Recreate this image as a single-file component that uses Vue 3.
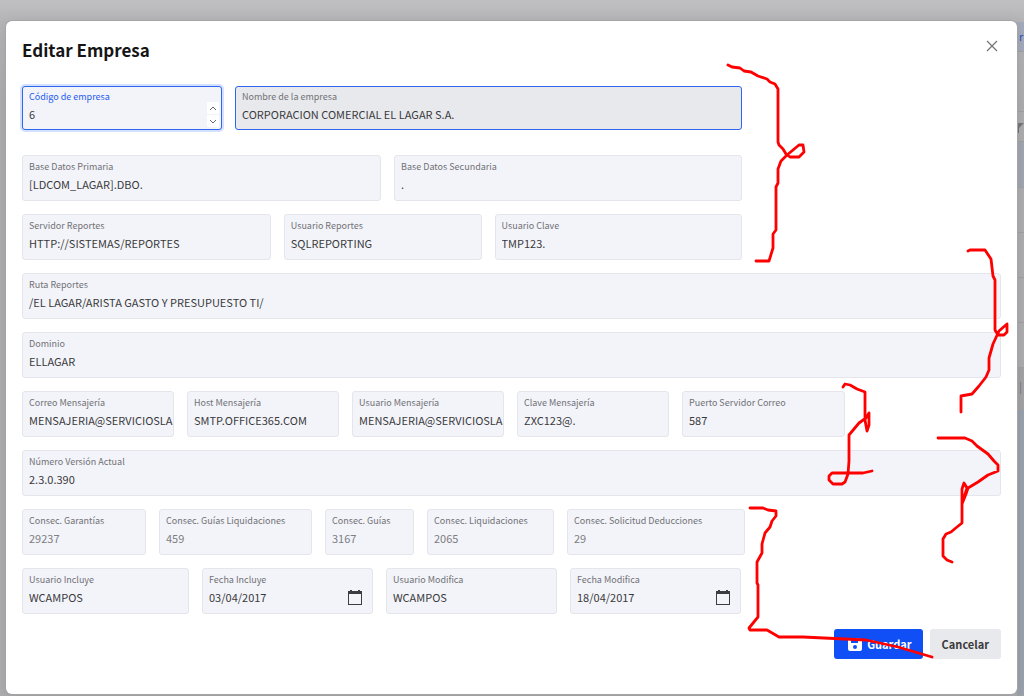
<script setup>
import { ref } from 'vue'

const open = ref(true)

const rows = ref([
  {
    rest: 246,
    lead: true,
    fields: [
      { id: 'codigo', label: 'Código de empresa', value: '6', span: 200, kind: 'number' },
      { id: 'nombre', label: 'Nombre de la empresa', value: 'CORPORACION COMERCIAL EL LAGAR S.A.', span: 507, kind: 'locked' }
    ]
  },
  {
    rest: 246,
    fields: [
      { id: 'bd1', label: 'Base Datos Primaria', value: '[LDCOM_LAGAR].DBO.', span: 359 },
      { id: 'bd2', label: 'Base Datos Secundaria', value: '.', span: 348 }
    ]
  },
  {
    rest: 246,
    fields: [
      { id: 'servidor', label: 'Servidor Reportes', value: 'HTTP://SISTEMAS/REPORTES', span: 249 },
      { id: 'usuarioRep', label: 'Usuario Reportes', value: 'SQLREPORTING', span: 198 },
      { id: 'claveRep', label: 'Usuario Clave', value: 'TMP123.', span: 248 }
    ]
  },
  { rest: 0, fields: [{ id: 'ruta', label: 'Ruta Reportes', value: '/EL LAGAR/ARISTA GASTO Y PRESUPUESTO TI/', span: 979 }] },
  { rest: 0, fields: [{ id: 'dominio', label: 'Dominio', value: 'ELLAGAR', span: 979 }] },
  {
    rest: 143,
    fields: [
      { id: 'correo', label: 'Correo Mensajería', value: 'MENSAJERIA@SERVICIOSLA', span: 152 },
      { id: 'host', label: 'Host Mensajería', value: 'SMTP.OFFICE365.COM', span: 152 },
      { id: 'usuarioMsg', label: 'Usuario Mensajería', value: 'MENSAJERIA@SERVICIOSLA', span: 152 },
      { id: 'claveMsg', label: 'Clave Mensajería', value: 'ZXC123@.', span: 152 },
      { id: 'puerto', label: 'Puerto Servidor Correo', value: '587', span: 163 }
    ]
  },
  { rest: 0, fields: [{ id: 'version', label: 'Número Versión Actual', value: '2.3.0.390', span: 979 }] },
  {
    rest: 243,
    fields: [
      { id: 'cGar', label: 'Consec. Garantías', value: '29237', span: 124, kind: 'muted' },
      { id: 'cGuiLiq', label: 'Consec. Guías Liquidaciones', value: '459', span: 153, kind: 'muted' },
      { id: 'cGui', label: 'Consec. Guías', value: '3167', span: 89, kind: 'muted' },
      { id: 'cLiq', label: 'Consec. Liquidaciones', value: '2065', span: 127, kind: 'muted' },
      { id: 'cSol', label: 'Consec. Solicitud Deducciones', value: '29', span: 178, kind: 'muted' }
    ]
  },
  {
    rest: 247,
    fields: [
      { id: 'uInc', label: 'Usuario Incluye', value: 'WCAMPOS', span: 167 },
      { id: 'fInc', label: 'Fecha Incluye', value: '03/04/2017', span: 171, kind: 'date' },
      { id: 'uMod', label: 'Usuario Modifica', value: 'WCAMPOS', span: 171 },
      { id: 'fMod', label: 'Fecha Modifica', value: '18/04/2017', span: 171, kind: 'date' }
    ]
  }
])

function columns(row) {
  const spans = row.fields.map((f) => f.span)
  if (row.rest) spans.push(row.rest)
  return spans.map((s) => `minmax(0, ${s}fr)`).join(' ')
}

function step(field, by) {
  field.value = String(Number(field.value) + by)
}
</script>

<template>
  <div class="page">
    <div class="behind" aria-hidden="true">
      <div class="strip strip-tab">r</div>
      <div class="strip strip-head"></div>
      <div class="strip strip-filter">
        <svg viewBox="0 0 12 12"><path d="M0 1h12L7 6v5H5V6z" /></svg>
      </div>
      <div class="strip strip-selected"></div>
      <div class="strip strip-row"></div>
      <div class="strip strip-row"></div>
      <div class="strip strip-row"></div>
      <div class="strip strip-row"></div>
      <div class="strip strip-bar">|</div>
      <div class="strip strip-foot"></div>
    </div>

    <section v-if="open" class="modal" role="dialog" aria-labelledby="titulo">
      <header class="head">
        <h1 id="titulo">Editar Empresa</h1>
        <button class="close" type="button" aria-label="Cerrar" @click="open = false">
          <svg viewBox="0 0 12 12"><path d="M1 1l10 10M11 1L1 11" /></svg>
        </button>
      </header>

      <form class="form" @submit.prevent>
        <div
          v-for="(row, i) in rows"
          :key="i"
          class="row"
          :class="{ lead: row.lead }"
          :style="{ gridTemplateColumns: columns(row) }"
        >
          <div v-for="f in row.fields" :key="f.id" class="field" :class="f.kind">
            <label :for="f.id">{{ f.label }}</label>
            <input :id="f.id" v-model="f.value" type="text" :readonly="f.kind === 'locked'" />
            <div v-if="f.kind === 'number'" class="spin">
              <button type="button" aria-label="Aumentar" @click="step(f, 1)">
                <svg viewBox="0 0 8 5"><path d="M1 4l3-3 3 3" /></svg>
              </button>
              <button type="button" aria-label="Disminuir" @click="step(f, -1)">
                <svg viewBox="0 0 8 5"><path d="M1 1l3 3 3-3" /></svg>
              </button>
            </div>
            <button v-if="f.kind === 'date'" class="cal" type="button" aria-label="Elegir fecha">
              <svg viewBox="0 0 14 15"><path d="M2 0h2v1h6V0h2v1h2v14H0V1h2zM1 4v10h12V4z" fill-rule="evenodd" /></svg>
            </button>
          </div>
        </div>

        <div class="actions">
          <button class="btn primary" type="submit">
            <svg viewBox="0 0 14 13">
              <path d="M2 0h8l4 3v8a2 2 0 0 1-2 2H2a2 2 0 0 1-2-2V2a2 2 0 0 1 2-2zM3 2v3h7V2zM7 7a2 2 0 1 0 0 4a2 2 0 0 0 0-4z" fill-rule="evenodd" />
            </svg>
            Guardar
          </button>
          <button class="btn" type="button" @click="open = false">Cancelar</button>
        </div>
      </form>
    </section>

    <svg class="marks" viewBox="0 0 1024 696" preserveAspectRatio="none" aria-hidden="true">
      <path d="M728 65L732 67L740 68L744 71L751 72L758 76L767 79L770 82L775 84L778 89V142L779 145L783 149L786 154L790 157H799L804 152L803 145L799 145L787 155L781 161L778 169V183L776 187V230L773 234V248L769 261H756" />
      <path d="M968 251L970 250H985L991 259L993 276L995 280V330L998 335H1004L1007 332V324L999 331L993 344L989 358V370L986 377L979 386L972 394L961 396V412" />
      <path d="M843 387L845 384L850 385L857 389L865 392V420L867 431L869 425V413L866 418L859 423L849 435V461L848 474L845 482L842 484H833L829 480V476L832 473L863 473L872 471" />
      <path d="M938 438H965L972 441L977 446L988 454L994 461L998 465V471L988 475L978 482L968 488L966 494L962 504L962 489L964 483L967 488L962 504V523L957 527L951 532L946 534L943 539V556L947 560L952 562" />
      <path d="M750 508H763L768 510L776 511V516L772 521L770 527L765 533L762 544V553L757 562V583L758 585V617L749 628L750 630H767L779 637L803 637L866 640L898 647L932 657" />
    </svg>
  </div>
</template>

<style>
body {
  margin: 0;
  overflow: hidden;
}
</style>

<style scoped>
.page {
  position: relative;
  box-sizing: border-box;
  min-height: 100vh;
  padding: 21px 7px 2px 6px;
  overflow: hidden;
  background: linear-gradient(#c0c0c2, #b5b5b7 21px, #aeaeb0 100px, #aeaeb0);
  font-family: "Noto Sans CJK SC", "Noto Sans", sans-serif;
  font-size: 11px;
  color: #3a3a3c;
}
button,
input {
  font: inherit;
  color: inherit;
}
.behind {
  position: absolute;
  top: 0;
  right: 0;
  bottom: 0;
  width: 7px;
  padding-top: 22px;
  display: flex;
  flex-direction: column;
}
.strip {
  box-sizing: border-box;
  flex: none;
  overflow: hidden;
  border-bottom: 1px solid #a2a2a4;
}
.strip-tab {
  height: 30px;
  padding-left: 2px;
  line-height: 29px;
  background: #a3abbd;
  color: #2c57b4;
}
.strip-head {
  height: 60px;
}
.strip-filter {
  height: 30px;
  padding-top: 10px;
}
.strip-filter svg {
  display: block;
  width: 12px;
  height: 12px;
  margin-left: -5px;
  fill: #77777a;
}
.strip-selected {
  height: 46px;
  background: #a2a7b2;
}
.strip-row {
  height: 45px;
}
.strip-bar {
  height: 42px;
  line-height: 36px;
  text-align: center;
  background: #a4a4a6;
  color: #77777a;
}
.strip-foot {
  flex: 1;
  background: #9aa3ae;
}
.modal {
  position: relative;
  box-sizing: border-box;
  min-height: calc(100vh - 23px);
  padding: 13px 16px 16px;
  border-radius: 6px;
  background: #fff;
  box-shadow: 0 0 0 1px #a5a5a7, 0 4px 16px rgba(0, 0, 0, 0.12);
}
.head {
  display: flex;
  justify-content: space-between;
  height: 52px;
}
h1 {
  margin: 0;
  font-size: 17px;
  line-height: 32px;
  font-weight: 700;
  color: #151515;
}
.close {
  width: 18px;
  height: 24px;
  padding: 3px;
  border: 0;
  background: none;
}
.close svg {
  display: block;
  width: 12px;
  height: 12px;
  fill: none;
  stroke: #77777a;
  stroke-width: 1.3;
}
.form {
  display: flex;
  flex-direction: column;
  gap: 13px;
}
.row {
  display: grid;
  gap: 13px;
}
.row.lead {
  margin-bottom: 12px;
}
.field {
  position: relative;
  box-sizing: border-box;
  height: 46px;
  padding: 1px 0 0 6px;
  border: 1px solid #e5e6eb;
  border-radius: 3px;
  background: #f3f4f9;
}
.lead .field {
  height: 44px;
  padding-top: 0;
  border-color: #2e66ee;
}
.field.number {
  box-shadow: 0 0 0 2px #d3e0ff;
}
.field.locked {
  background: #e8e9ed;
}
label {
  display: block;
  font-size: 9px;
  line-height: 20px;
  color: #717176;
}
.number label {
  color: #1f5cf0;
}
input {
  display: block;
  box-sizing: border-box;
  width: 100%;
  height: 14px;
  padding: 0;
  border: 0;
  outline: 0;
  background: none;
  line-height: 14px;
}
.muted input {
  color: #7d7d82;
}
.spin {
  position: absolute;
  right: 2px;
  bottom: 2px;
  display: grid;
  gap: 1px;
}
.spin button {
  width: 12px;
  height: 12px;
  padding: 3px 2px;
  border: 0;
  border-radius: 1px;
  background: #fff;
}
.spin svg {
  display: block;
  width: 8px;
  height: 5px;
  fill: none;
  stroke: #68686c;
}
.cal {
  position: absolute;
  right: 10px;
  bottom: 8px;
  padding: 0;
  border: 0;
  background: none;
}
.cal svg {
  display: block;
  width: 14px;
  height: 15px;
  fill: #3d3d40;
}
.actions {
  display: flex;
  justify-content: flex-end;
  gap: 7px;
  margin-top: 2px;
}
.btn {
  display: flex;
  align-items: center;
  gap: 5px;
  height: 30px;
  padding: 0 12px;
  border: 0;
  border-radius: 3px;
  background: #e8e9ed;
  font-weight: 700;
}
.primary {
  padding: 0 11px 0 14px;
  background: #0f4ff5;
  color: #fff;
}
.primary svg {
  width: 14px;
  height: 13px;
  fill: #fff;
}
.marks {
  position: absolute;
  inset: 0;
  width: 100%;
  height: 100%;
  pointer-events: none;
  fill: none;
  stroke: #f00;
  stroke-width: 2.8;
  stroke-linecap: round;
  stroke-linejoin: round;
}
</style>
